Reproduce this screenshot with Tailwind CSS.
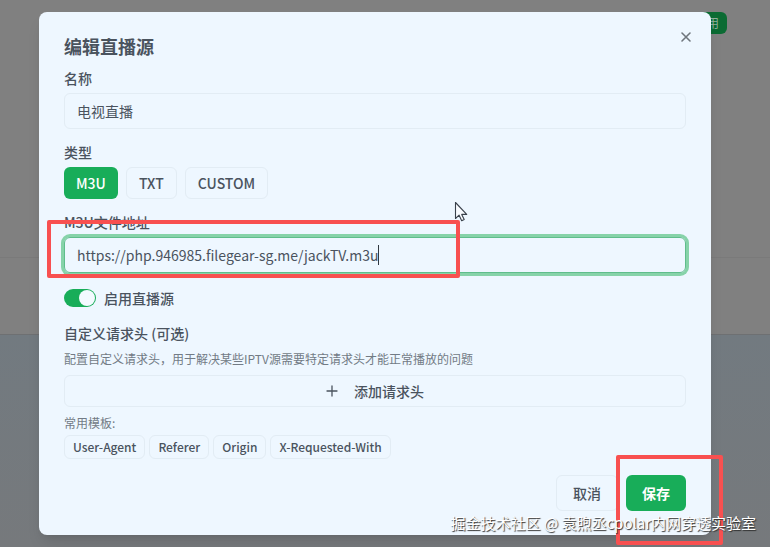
<!DOCTYPE html>
<html lang="zh-CN">
<head>
  <meta charset="UTF-8" />
  <meta name="viewport" content="width=device-width, initial-scale=1.0" />
  <title>编辑直播源</title>
  <script src="https://cdn.jsdelivr.net/npm/@tailwindcss/browser@4"></script>
</head>
<body class="relative min-h-screen overflow-hidden bg-[#808080] font-['Noto_Sans_CJK_SC',sans-serif] text-sm text-[#4a535e]">

  <!-- Dimmed page behind the dialog -->
  <div class="absolute inset-0 flex flex-col">
    <div class="flex h-[258px] justify-end border-b border-[#7a7a7a] pt-3 pr-[43px]">
      <button type="button" class="h-[22px] rounded-md bg-[#0b6b33] px-2 text-xs text-[#8fae9c]">启用</button>
    </div>
    <div class="h-[77px] border-b border-[#6e7072]"></div>
    <div class="flex-1 bg-linear-to-b from-[#727a80] to-[#76797c]"></div>
  </div>

  <!-- Edit dialog -->
  <div class="relative pt-3 pr-[59px] pl-[39px]">
    <div role="dialog" aria-labelledby="dialogTitle" class="relative w-full max-w-2xl rounded-lg bg-[#eef7ff] px-[25px] pt-6 pb-6 shadow-lg">
      <button type="button" aria-label="关闭" class="absolute top-[17px] right-[17px] text-[#6f767d]">
        <svg class="size-4" viewBox="0 0 16 16" fill="none" stroke="currentColor" stroke-width="1.6" stroke-linecap="round"><path d="M4 4l8 8M12 4l-8 8" /></svg>
      </button>

      <h2 id="dialogTitle" class="text-lg leading-5 font-bold">编辑直播源</h2>

      <form id="sourceForm">
        <label for="sourceName" class="mt-3 block leading-5 font-medium">名称</label>
        <input type="text" id="sourceName" value="电视直播" class="mt-[5px] block h-9 w-full rounded-md border border-[#e2ecf4] px-3" />

        <fieldset class="mt-[13px]">
          <legend class="block leading-5 font-medium">类型</legend>
          <div class="mt-[5px] flex gap-2">
            <button type="button" class="h-8 rounded-md bg-[#18ad59] px-3 font-medium text-white">M3U</button>
            <button type="button" class="h-8 rounded-md border border-[#e2ecf4] px-3 font-medium">TXT</button>
            <button type="button" class="h-8 rounded-md border border-[#e2ecf4] px-3 font-medium">CUSTOM</button>
          </div>
        </fieldset>

        <label for="sourceUrl" class="mt-[13px] block leading-5 font-medium">M3U文件地址</label>
        <div class="relative mt-[5px]">
          <input type="text" id="sourceUrl" value="https://php.946985.filegear-sg.me/jackTV.m3u" class="block h-9 w-full rounded-md border border-[#5fbd8c] px-3 ring-3 ring-[#86d3a9] outline-none" />
          <span class="absolute top-2 left-[314px] h-5 w-px bg-[#303840]"></span>
        </div>

        <label class="mt-[15px] flex h-5 items-center gap-2 font-medium">
          <input type="checkbox" role="switch" checked class="peer sr-only" />
          <span class="flex h-[18px] w-8 items-center justify-end rounded-full bg-[#18ad59] px-px"><span class="size-4 rounded-full bg-[#f3faff]"></span></span>
          启用直播源
        </label>

        <h3 class="mt-[15px] leading-5 font-medium">自定义请求头 (可选)</h3>
        <p class="mt-1.5 text-xs leading-5 text-[#727b85]">配置自定义请求头，用于解决某些IPTV源需要特定请求头才能正常播放的问题</p>
        <button type="button" class="mt-1.5 flex h-8 w-full items-center justify-center gap-4 rounded-md border border-[#e2ecf4] font-medium">
          <svg class="size-3" viewBox="0 0 12 12" fill="none" stroke="currentColor" stroke-width="1.3" stroke-linecap="round"><path d="M1 6h10M6 1v10" /></svg>
          添加请求头
        </button>

        <p class="mt-2 text-xs leading-4 text-[#727b85]">常用模板:</p>
        <div class="mt-1 flex gap-1 text-xs font-medium">
          <button type="button" class="h-6 rounded-md border border-[#e2ecf4] px-2">User-Agent</button>
          <button type="button" class="h-6 rounded-md border border-[#e2ecf4] px-2">Referer</button>
          <button type="button" class="h-6 rounded-md border border-[#e2ecf4] px-2">Origin</button>
          <button type="button" class="h-6 rounded-md border border-[#e2ecf4] px-2">X-Requested-With</button>
        </div>

        <div class="mt-4 flex justify-end gap-2">
          <button type="button" class="h-9 rounded-md border border-[#e2ecf4] px-4 font-medium">取消</button>
          <button type="submit" class="h-9 rounded-md bg-[#18ad59] px-4 font-bold text-white">保存</button>
        </div>
      </form>
    </div>
  </div>

  <!-- Annotations -->
  <svg class="absolute top-[201px] left-[454px] h-[21px] w-[14px]" viewBox="0 0 14 21" fill="#f8fbff" stroke="#39414b" stroke-width="1.1" stroke-linejoin="round"><path d="M1.500 1.500v16l3.600-3.300 2.600 5.600 2.500-1.200-2.500-5.200h5z" /></svg>
  <div class="absolute top-[220px] left-[47px] h-[58px] w-[413px] rounded-xs border-4 border-[#f85050]"></div>
  <div class="absolute top-[455px] left-[616px] h-[90px] w-[107px] rounded-xs border-4 border-[#f85050]"></div>
  <p class="absolute right-[14px] bottom-3 text-[15px] leading-6 whitespace-nowrap text-white text-shadow-[1px_1px_1px_#303030]">掘金技术社区 @ 袁煦丞cpolar内网穿透实验室</p>
</body>
</html>
